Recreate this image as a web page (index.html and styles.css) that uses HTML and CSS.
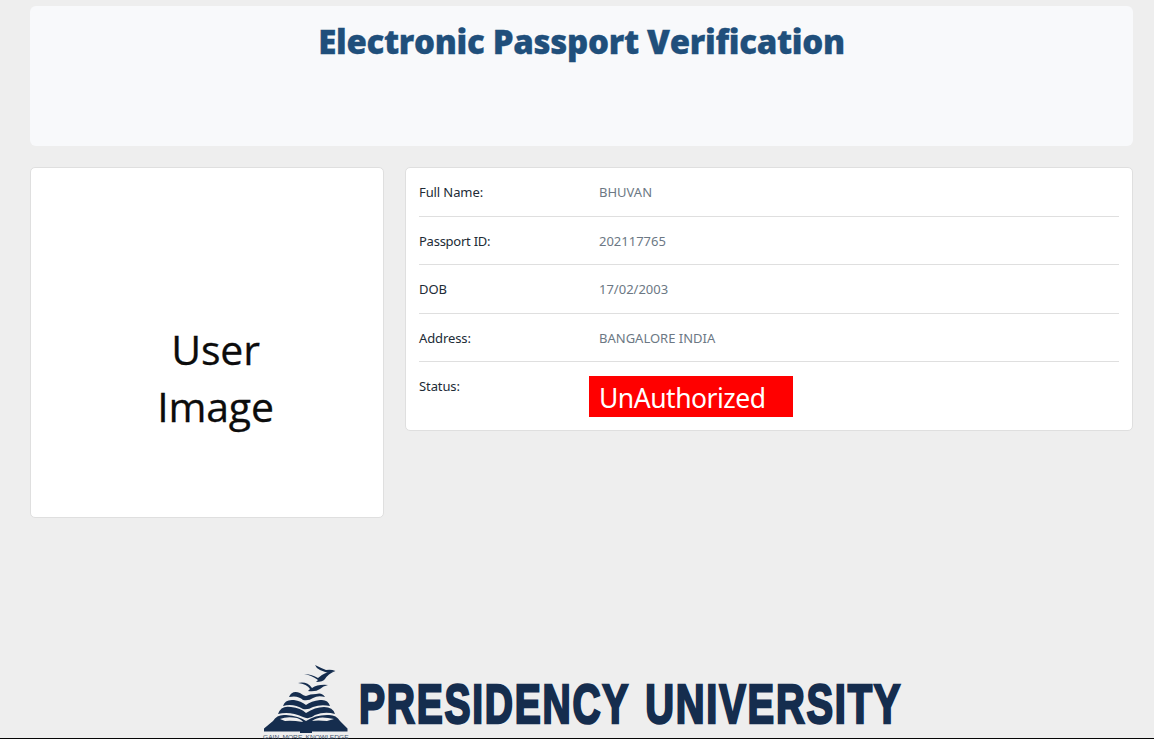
FILE: index.html
```html
<!DOCTYPE html>
<html lang="en">
<head>
<meta charset="utf-8">
<title>Electronic Passport Verification</title>
<link rel="stylesheet" href="styles.css">
</head>
<body>
<div class="page">
  <header class="banner"><h1 class="title">Electronic Passport Verification</h1></header>
  <main class="content">
    <section class="card photo"><span>User</span><span>Image</span></section>
    <section class="card details">
      <div class="row"><span class="label">Full Name:</span><span class="value">BHUVAN</span></div>
      <div class="row"><span class="label passport">Passport ID:</span><span class="value">202117765</span></div>
      <div class="row"><span class="label">DOB</span><span class="value">17/02/2003</span></div>
      <div class="row"><span class="label">Address:</span><span class="value">BANGALORE INDIA</span></div>
      <div class="row"><span class="label">Status:</span><span class="status">UnAuthorized</span></div>
    </section>
  </main>
  <footer class="footer">
    <svg class="logo" viewBox="0 0 650 84" width="650" height="84" role="img" aria-label="Presidency University">
      <g fill="#152d4e">
        <path d="M60 10Q66 13 71 15Q76 14 80.500 16Q76 17 73 18Q70 17 65 15Q61 13 60 10Z"/>
        <path d="M49 19Q56 19 63 23Q69 17 80 16Q73 19 70 24Q68 27 61 27L63 25Q56 20 49 19Z"/>
        <path d="M43 28Q52 26 57 33Q63 29 73 30Q68 31 65 34Q61 37 53 36L55 34Q52 29 43 28Z"/>
        <path d="M34 42Q37 35 45 38Q49 41 51 41Q55 39 61 39Q67 37 70 42Q63 40 58 43Q54 46 48 45Q43 40 34 42Z"/>
        <path d="M28 51Q30 44 39 45Q46 46 51 50Q56 46 65 45Q73 44 75 51Q66 49 58 52Q53 55 48 54Q38 48 28 51Z"/>
        <path d="M23 59Q26 50 36 52Q46 53 51 58Q60 52 69 52Q78 52 80 59Q70 56 60 60Q54 65 48 62Q35 56 23 59Z"/>
        <path fill-rule="evenodd" d="M18 66Q22 59 31 60Q44 61 51 66Q60 60 72 60Q81 59 85 66L92.500 73.500V76.500H57V78H45V76.500H9V73.500ZM25 64Q32 61 42 63Q47 65 48 67Q36 65 30 66ZM57 66Q63 61 73 63L79 64L72 66Q62 65 57 66Z"/>
      </g>
      <text class="wordmark" transform="translate(104 68) scale(.697 1)">PRESIDENCY</text>
      <text class="wordmark" transform="translate(390.200 68) scale(.712 1)">UNIVERSITY</text>
      <text class="motto" transform="translate(8 83.500) scale(1.330 1)">GAIN MORE KNOWLEDGE</text>
    </svg>
  </footer>
</div>
</body>
</html>
```
FILE: styles.css
```css
* { box-sizing: border-box; }
body { margin: 0; background: #eee; overflow: hidden; }
.page { height: 739px; padding: 6px 21px 0 30px; display: flex; flex-direction: column; border-bottom: 1px solid #050505; font-family: "Noto Sans", sans-serif; }
.banner { height: 140px; flex: none; border-radius: 6px; background: #f8f9fb; text-align: center; padding-top: 13px; }
.title { margin: 0; font: 800 33px/46px "Open Sans", sans-serif; letter-spacing: -.3px; color: #204f7b; -webkit-text-stroke: .3px #204f7b; white-space: nowrap; }
.content { display: grid; grid-template-columns: 354px 728px; gap: 21px; margin-top: 21px; align-items: start; }
.card { background: #fff; border: 1px solid #dfdfdf; border-radius: 5px; }
.photo { height: 351px; padding: 153px 0 0 17px; display: flex; flex-direction: column; align-items: center; font: 41px/57px "Open Sans", sans-serif; letter-spacing: -.2px; color: #0c0c0c; -webkit-text-stroke: .3px #0c0c0c; }
.details { height: 264px; padding: 0 13px; font-size: 13px; }
.row { height: 48.600px; display: flex; border-bottom: 1px solid #dfdfdf; line-height: 20px; padding-top: 14px; white-space: nowrap; }
.row:last-child { border-bottom: 0; height: 68px; }
.label { width: 180px; flex: none; color: #212b36; letter-spacing: -.1px; }
.passport { letter-spacing: -.25px; }
.value { color: #6c7884; }
.status { width: 204px; height: 41px; margin-left: -10px; padding-left: 10px; background: #f00; color: #fff; font: 26.500px/44px "Noto Sans", sans-serif; letter-spacing: -.5px; }
.footer { margin-top: auto; margin-left: 225px; height: 83px; }
.logo { display: block; }
.wordmark { font: 700 56px "Liberation Sans", Arial, sans-serif; letter-spacing: 2.500px; fill: #152d4e; stroke: #152d4e; stroke-width: 2.500px; }
.motto { font: 400 5px "Liberation Sans", Arial, sans-serif; fill: #43536b; word-spacing: 1px; }
```
